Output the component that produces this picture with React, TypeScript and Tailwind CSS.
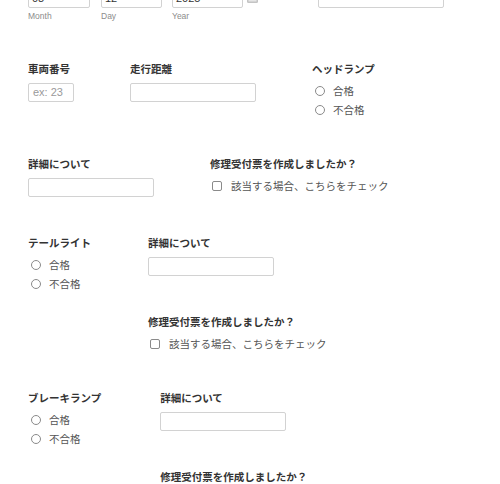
import React from 'react';

const jp = "font-['Noto_Sans_CJK_JP','Noto_Sans',sans-serif]";

const Field = ({ label, children }: { label: string; children: React.ReactNode }) => (
  <div className="pb-[39px]">
    <div className="mb-[7px] text-[10.5px] leading-[14px] font-bold text-[#333]">{label}</div>
    {children}
  </div>
);

const TextBox = ({ width, placeholder }: { width: string; placeholder?: string }) => (
  <div
    className={`${width} h-[19px] border border-[#d2d2d2] rounded-[2px] bg-white px-[4px] flex items-center text-[11px] text-[#9a9a9a] font-['Liberation_Sans',Arial,sans-serif]`}
  >
    {placeholder}
  </div>
);

const RadioGroup = () => (
  <div className="flex flex-col gap-[3px]">
    {['合格', '不合格'].map((opt) => (
      <div key={opt} className="flex items-center h-4">
        <span className="ml-[3px] w-[10px] h-[10px] rounded-full border border-[#8a8a8a]" />
        <span className="ml-[8px] text-[10.5px] text-[#555]">{opt}</span>
      </div>
    ))}
  </div>
);

const CheckBox = () => (
  <div className="flex items-center h-4">
    <span className="ml-[2px] w-[10px] h-[10px] rounded-[2px] border border-[#8a8a8a]" />
    <span className="ml-[9px] text-[10.5px] text-[#555]">該当する場合、こちらをチェック</span>
  </div>
);

const DetailColumn = () => (
  <div>
    <Field label="詳細について">
      <TextBox width="w-[126px]" />
    </Field>
    <Field label="修理受付票を作成しましたか？">
      <CheckBox />
    </Field>
  </div>
);

const DatePart = ({ value, width, sub }: { value: string; width: string; sub: string }) => (
  <div>
    <div
      className={`${width} h-[19px] border border-[#d2d2d2] rounded-[2px] px-[3px] flex items-center text-[11px] text-[#333] font-['Liberation_Sans',Arial,sans-serif]`}
    >
      {value}
    </div>
    <div className="mt-[3px] text-[8.5px] leading-[10px] text-[#8c8c8c] font-['Liberation_Sans',Arial,sans-serif]">
      {sub}
    </div>
  </div>
);

const Dash = ({ width }: { width: string }) => (
  <div className={`${width} h-[19px] flex items-center justify-center text-[11px] text-[#555]`}>-</div>
);

export default function App() {
  return (
    <div className={`w-[500px] h-[484px] overflow-hidden bg-white ${jp}`}>
      <div className="-mt-[11px] pl-[28px]">
        {/* date + top right field */}
        <div className="flex gap-x-[56px] pb-[41px]">
          <div className="flex items-start">
            <DatePart value="08" width="w-[62px]" sub="Month" />
            <Dash width="w-[11px]" />
            <DatePart value="12" width="w-[61px]" sub="Day" />
            <Dash width="w-[10px]" />
            <DatePart value="2025" width="w-[71px]" sub="Year" />
            <svg className="mt-[2px] ml-[4px] mr-[4px]" width="11" height="12" viewBox="0 0 11 12">
              <rect x="0" y="1" width="11" height="11" rx="1.5" fill="#c4c4c4" />
              <rect x="1.5" y="4" width="8" height="6.5" fill="#e6e6e6" />
              <rect x="2.5" y="0" width="1.5" height="3" fill="#9e9e9e" />
              <rect x="7" y="0" width="1.5" height="3" fill="#9e9e9e" />
            </svg>
          </div>
          <TextBox width="w-[126px]" />
        </div>

        {/* row 2 */}
        <div className="flex gap-x-[56px]">
          <Field label="車両番号">
            <TextBox width="w-[46px]" placeholder="ex: 23" />
          </Field>
          <Field label="走行距離">
            <TextBox width="w-[126px]" />
          </Field>
          <Field label="ヘッドランプ">
            <RadioGroup />
          </Field>
        </div>

        {/* row 3 */}
        <div className="flex gap-x-[56px]">
          <Field label="詳細について">
            <TextBox width="w-[126px]" />
          </Field>
          <Field label="修理受付票を作成しましたか？">
            <CheckBox />
          </Field>
        </div>

        {/* tail light */}
        <div className="flex gap-x-[57px]">
          <Field label="テールライト">
            <RadioGroup />
          </Field>
          <DetailColumn />
        </div>

        {/* brake lamp */}
        <div className="flex gap-x-[59px]">
          <Field label="ブレーキランプ">
            <RadioGroup />
          </Field>
          <DetailColumn />
        </div>
      </div>
    </div>
  );
}
